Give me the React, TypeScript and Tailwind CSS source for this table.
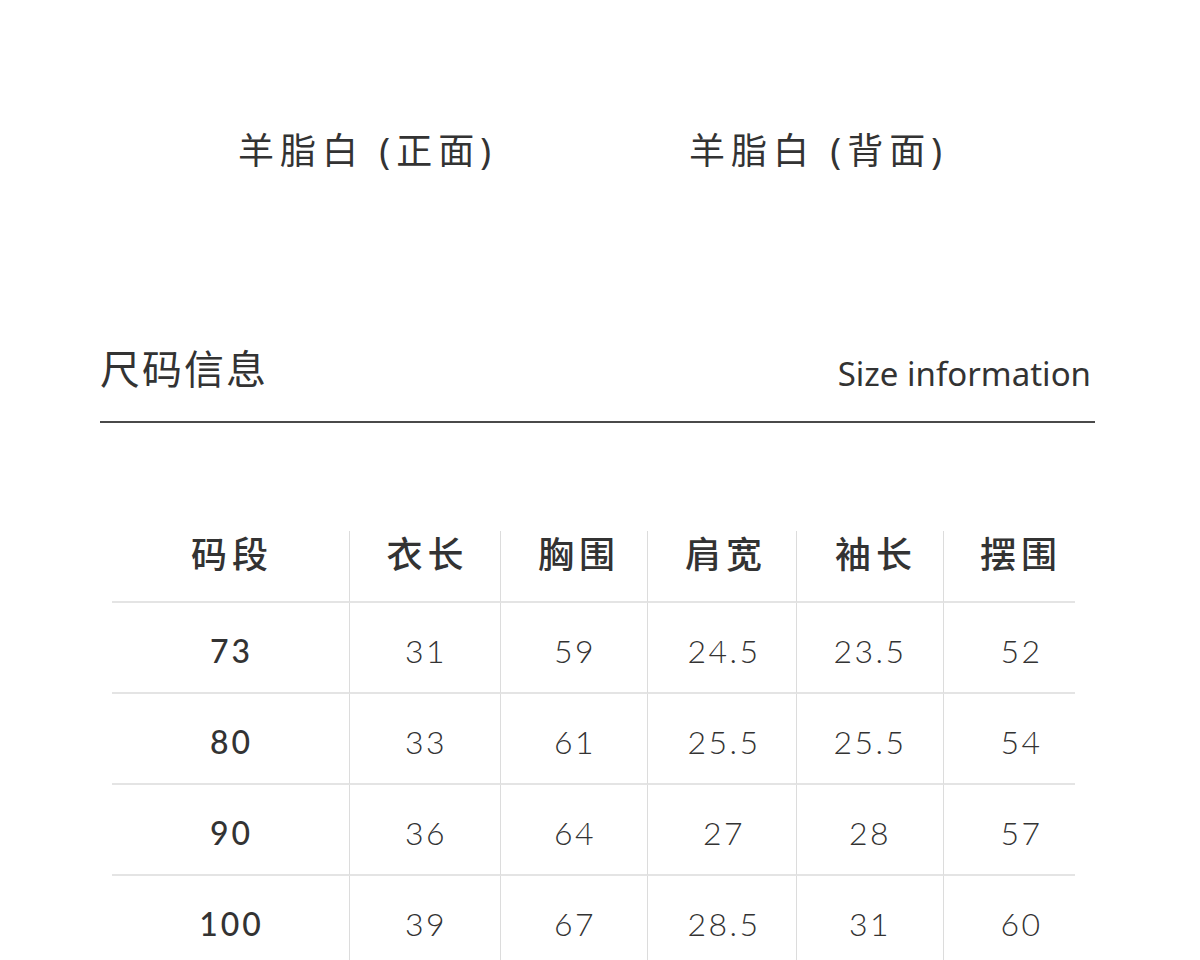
const cols = ["码段", "衣长", "胸围", "肩宽", "袖长", "摆围"];

const rows = [
  ["73", "31", "59", "24.5", "23.5", "52"],
  ["80", "33", "61", "25.5", "25.5", "54"],
  ["90", "36", "64", "27", "28", "57"],
  ["100", "39", "67", "28.5", "31", "60"],
];

const widths = ["w-[237px]", "w-[151px]", "w-[147px]", "w-[149px]", "w-[147px]", "w-[132px]"];
// small nudges so the header text sits where the picture has it
const headPad = ["pl-[3px]", "pl-[5px]", "pl-[10px]", "pl-[8px]", "pl-[12px]", "pl-[23px]"];
const cellPad = ["pl-[2px]", "pl-[2px]", "pl-[2px]", "pl-[4px]", "pl-[0px]", "pl-[24px]"];

const cjk = "font-['Noto_Sans','Noto_Sans_CJK_SC',sans-serif]";

export default function App() {
  return (
    <div className={`w-[1200px] h-[960px] overflow-hidden bg-white text-[#333] ${cjk}`}>
      {/* colour labels */}
      <div className="flex pt-[131px] pl-[238px] text-[36px] leading-[40px] tracking-[6px]">
        <span className="w-[451px]">羊脂白 (正面)</span>
        <span>羊脂白 (背面)</span>
      </div>

      {/* section title */}
      <div className="mt-[176px] mx-[100px] w-[995px]">
        <div className="flex justify-between items-end pb-[28px]">
          <h2 className="text-[40px] leading-[44px] tracking-[2px] font-normal">尺码信息</h2>
          <span className="text-[33px] leading-[36px] pr-[4px] translate-y-[1px] font-['Noto_Sans',sans-serif]">Size information</span>
        </div>
        <div className="h-[2px] bg-[#4a4a4a] mt-[2px]" />
      </div>

      {/* size table */}
      <div className="mt-[108px] ml-[112px] w-[963px]">
        <div className="flex">
          {cols.map((c, i) => (
            <div
              key={c}
              className={`${widths[i]} ${headPad[i]} h-[72px] flex justify-center pt-[4px] border-b-2 border-[#e4e4e4] ${i > 0 ? "border-l border-l-[#dcdcdc]" : ""} text-[36px] leading-[40px] font-medium tracking-[5px]`}
            >
              {c}
            </div>
          ))}
        </div>
        {rows.map((r) => (
          <div key={r[0]} className="flex">
            {r.map((v, i) => (
              <div
                key={i}
                className={`${widths[i]} ${cellPad[i]} h-[91px] flex justify-center items-center pt-[6px] border-b-2 border-[#e4e4e4] font-['Lato','Noto_Sans',sans-serif] ${i > 0 ? "border-l border-l-[#dcdcdc] font-light tracking-[2.5px]" : "font-medium tracking-[3px]"} text-[32px] leading-[36px]`}
              >
                {v}
              </div>
            ))}
          </div>
        ))}
      </div>
    </div>
  );
}
